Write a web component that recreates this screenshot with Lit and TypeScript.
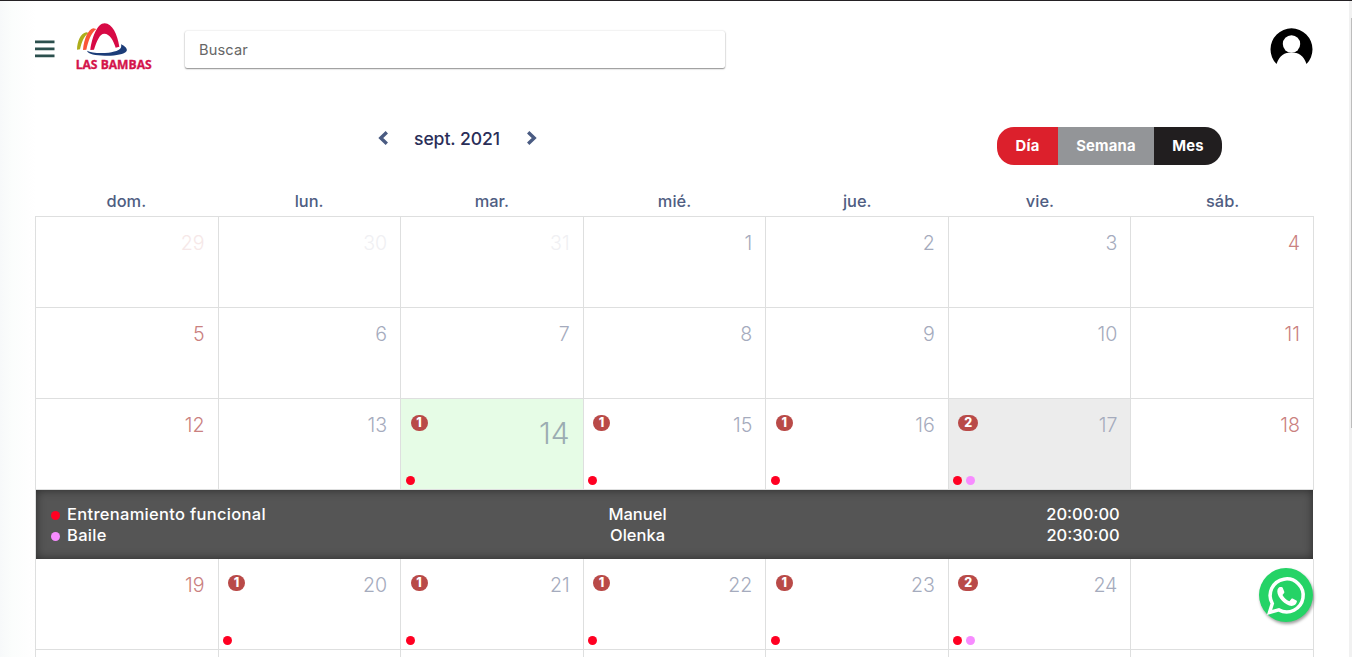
import { LitElement, html, css, svg, nothing } from "lit";
import { customElement, property } from "lit/decorators.js";
import { classMap } from "lit/directives/class-map.js";

interface Day {
  n?: number;
  out?: boolean;
  today?: boolean;
  open?: boolean;
  events?: string[];
}

const RED = "red";
const PINK = "pink";
const range = (from: number): Day[] => Array.from({ length: 7 }, (_, i) => ({ n: from + i }));

const WEEKS: Day[][] = [
  [{ n: 29, out: true }, { n: 30, out: true }, { n: 31, out: true }, { n: 1 }, { n: 2 }, { n: 3 }, { n: 4 }],
  range(5),
  [
    { n: 12 },
    { n: 13 },
    { n: 14, today: true, events: [RED] },
    { n: 15, events: [RED] },
    { n: 16, events: [RED] },
    { n: 17, open: true, events: [RED, PINK] },
    { n: 18 },
  ],
  [
    { n: 19 },
    { n: 20, events: [RED] },
    { n: 21, events: [RED] },
    { n: 22, events: [RED] },
    { n: 23, events: [RED] },
    { n: 24, events: [RED, PINK] },
    { n: 25 },
  ],
  Array.from({ length: 7 }, () => ({})),
];

const DETAILS = [
  { color: RED, title: "Entrenamiento funcional", coach: "Manuel", time: "20:00:00" },
  { color: PINK, title: "Baile", coach: "Olenka", time: "20:30:00" },
];

const chevron = (d: string) => html`<svg class="chev" viewBox="0 0 12 16" width="12" height="16">
  ${svg`<path d=${d} fill="none" stroke="#4a5b82" stroke-width="3.4"/>`}
</svg>`;

@customElement("top-bar")
class TopBar extends LitElement {
  static styles = css`
    :host { display: flex; height: 97px; padding: 0 39px 0 35px; }
    .menu { margin-top: 39px; width: 20px; height: 18px; }
    .logo { margin: 20px 0 0 20px; width: 78px; height: 50px; }
    .search {
      box-sizing: border-box; margin: 30px 0 0 32px; width: 540px; height: 37px; border: 0;
      border-radius: 2px; padding: 0 14px; background: #fff; outline: none;
      box-shadow: 0 1px 1.5px rgba(0, 0, 0, 0.42), 0 0 2px rgba(0, 0, 0, 0.16);
      font: 400 14.6px Inter, sans-serif; letter-spacing: 0.15px; color: #666;
    }
    .search::placeholder { color: #666; opacity: 1; }
    .avatar { margin: 26px 0 0 auto; width: 43px; height: 37px; }
  `;
  render() {
    return html`
      <svg class="menu" viewBox="0 0 20 18"><path d="M0 1.900h19.500M0 8.900h19.500M0 15.900h19.500" stroke="#2b4f4d" stroke-width="2.800"/></svg>
      <svg class="logo" viewBox="225 63 234 150">
        <path d="M231 149C232 124 241 101 259 97L266 99C252 108 245 126 240 148Z" fill="#adad1a"/>
        <path d="M249 150C252 116 264 89 280 85L289 87C272 101 265 123 259 149Z" fill="#fa5537"/>
        <path d="M261 152C273 159 301 161 326 158C350 155 368 149 363 133C376 139 383 147 380 153C372 164 343 168 314 167C287 166 264 162 261 152Z" fill="#1c3d78"/>
        <path d="M271 150C276 111 292 70 314 70C337 70 352 103 358 140L347 143C340 121 329 101 313 101C299 101 290 124 282 149Z" fill="#d70a45"/>
        <text x="227" y="206" textLength="228" lengthAdjust="spacingAndGlyphs" font-family="Open Sans, sans-serif" font-weight="700" font-size="35" fill="#d4144b" stroke="#d4144b" stroke-width="1">LAS BAMBAS</text>
      </svg>
      <input class="search" placeholder="Buscar" />
      <svg class="avatar" viewBox="0 0 43 37">
        <path d="M6.500 37A21 21 0 1 1 36.500 37C33.500 28 28.500 25.500 21.500 25.500S9.500 28 6.500 37Z" fill="#000"/>
        <circle cx="21.500" cy="17" r="8.700" fill="#fff"/>
      </svg>
    `;
  }
}

@customElement("day-cell")
class DayCell extends LitElement {
  @property({ attribute: false }) day!: Day;
  @property({ type: Boolean }) weekend = false;
  static styles = css`
    :host { display: block; min-width: 0; }
    .cell {
      box-sizing: border-box; height: 91px; display: flex; flex-direction: column; justify-content: space-between;
      border-right: 1px solid #dedfdf; border-bottom: 1px solid #dedfdf; padding: 16px 13px 4px 4.4px;
    }
    .today { background: #e6fce6; }
    .open { background: #ececec; }
    .top { display: flex; justify-content: space-between; align-items: flex-start; }
    .badge {
      margin-left: 5px; height: 16px; min-width: 17px; box-sizing: border-box; padding: 0 5px; border-radius: 10px;
      background: #b94a48; color: #fff; font: 800 12.5px/16px Inter, sans-serif; text-align: center;
    }
    .wide { min-width: 20px; }
    .num { margin-left: auto; font-size: 19.6px; line-height: 20px; color: #a5abbd; font-weight: 350; }
    .weekend .num { color: #ca8180; }
    .out .num { color: #f0f0f3; }
    .out.weekend .num { color: #f6e8e8; }
    .today .num { font-size: 30px; line-height: 36px; font-weight: 300; color: #9bacb2; }
    .dots { display: flex; gap: 4px; }
    .dot { width: 9px; height: 9px; border-radius: 50%; }
    .red { background: #ff0022; }
    .pink { background: #f78cff; }
  `;
  render() {
    const d = this.day;
    const ev = d.events ?? [];
    return html`<div class=${classMap({ cell: true, today: !!d.today, open: !!d.open, out: !!d.out, weekend: this.weekend })}>
      <div class="top">
        ${ev.length ? html`<span class=${classMap({ badge: true, wide: ev.length > 1 })}>${ev.length}</span>` : nothing}
        ${d.n ? html`<span class="num">${d.n}</span>` : nothing}
      </div>
      <div class="dots">${ev.map((c) => html`<span class="dot ${c}"></span>`)}</div>
    </div>`;
  }
}

@customElement("app-root")
class AppRoot extends LitElement {
  static styles = css`
    :host {
      display: block; position: relative; box-sizing: border-box; height: 657px; overflow: hidden;
      border-top: 1px solid #242124; font-family: Inter, sans-serif;
      background: linear-gradient(90deg, #f7f9fa 0, #fbfdfc 12px, #fefefe 28px, #fff 36px);
    }
    .tools { display: flex; height: 92px; }
    .nav { display: flex; align-items: center; margin: 29px 0 0 377px; height: 22px; }
    .month { width: 87px; margin: 0 24.5px 0 25px; font-size: 17.6px; font-weight: 500; color: #2a2e58; white-space: nowrap; letter-spacing: -0.1px; }
    .chev { display: block; }
    .views { display: flex; height: 38px; margin: 29px 130px 0 auto; border-radius: 17px; overflow: hidden; }
    .view { border: 0; padding: 0 0 1px; color: #fff; font: 700 14.8px Inter, sans-serif; letter-spacing: 0.2px; }
    .day { width: 61px; background: #dc202c; }
    .week { width: 96px; background: #939598; }
    .mon { width: 68px; background: #211e1f; }
    .names, .week-row { display: grid; grid-template-columns: repeat(7, 1fr); }
    .names { width: 1279px; margin-left: 35px; height: 26px; }
    .name { text-align: center; font-size: 16.400px; line-height: 22px; font-weight: 500; color: #4f5d82; }
    .grid { box-sizing: border-box; width: 1279px; margin-left: 35px; border: 1px solid #dedfdf; border-width: 1px 0 0 1px; }
    .panel {
      box-sizing: border-box; height: 69px; padding: 14px 0 0 15px; margin-right: 1px; background: #555;
      box-shadow: inset 0 0 10px rgba(0, 0, 0, 0.5); color: #fff; font-size: 16.5px; line-height: 21px; font-weight: 500;
    }
    .line { display: grid; grid-template-columns: 16px 402px 337px 1fr; }
    .title { letter-spacing: 0.3px; }
    .dot { width: 9px; height: 9px; border-radius: 50%; margin-top: 7px; }
    .red { background: #ff0022; }
    .pink { background: #f78cff; }
    .coach { width: 337px; text-align: center; }
    .time { width: 554px; text-align: center; }
    .wa { position: absolute; left: 1255px; top: 564px; width: 64px; height: 64px; filter: drop-shadow(1.5px 2px 1.5px rgba(0, 0, 0, 0.38)); }
    .track { position: absolute; right: 0; top: 0; width: 3px; height: 656px; background: #f1f1f1; }
    .thumb { margin: 17px 0 0 2px; height: 410px; background: #bdbdbd; }
  `;
  render() {
    return html`
      <top-bar></top-bar>
      <div class="tools">
        <div class="nav">
          ${chevron("M9.800 2.300L3.800 8L9.800 13.700")}
          <span class="month">sept. 2021</span>
          ${chevron("M2.200 2.300L8.200 8L2.200 13.700")}
        </div>
        <div class="views">
          <button class="view day">Día</button><button class="view week">Semana</button><button class="view mon">Mes</button>
        </div>
      </div>
      <div class="names">
        ${["dom.", "lun.", "mar.", "mié.", "jue.", "vie.", "sáb."].map((n) => html`<span class="name">${n}</span>`)}
      </div>
      <div class="grid">
        ${WEEKS.map(
          (w) => html`<div class="week-row">
              ${w.map((d, i) => html`<day-cell .day=${d} ?weekend=${i === 0 || i === 6}></day-cell>`)}
            </div>
            ${w.some((d) => d.open)
              ? html`<div class="panel">
                  ${DETAILS.map(
                    (e) => html`<div class="line">
                      <span class="dot ${e.color}"></span><span class="title">${e.title}</span>
                      <span class="coach">${e.coach}</span><span class="time">${e.time}</span>
                    </div>`
                  )}
                </div>`
              : nothing}`
        )}
      </div>
      <svg class="wa" viewBox="0 0 64 64">
        <circle cx="31" cy="30" r="27" fill="#25d366"/>
        <path d="M14.500 47.500L17.300 38.500A16.500 16.500 0 1 1 23.800 44.900Z" fill="none" stroke="#fff" stroke-width="3.500" stroke-linejoin="miter"/>
        <path d="M22.300 26.500C22.300 23.500 24 22 25 22h1.500c.6 0 1 .3 1.200.8l1.600 3.900c.2.500 0 1-.2 1.300l-1.600 2c1.500 3 4 5 6.900 6.200l1.900-2.300c.4-.5.8-.6 1.300-.4l3.800 1.900c.5.300.6.600.5 1.200c-.3 2.800-2.600 4.300-5.300 4.300c-6.500-.5-14.300-8.500-14.300-14.400Z" fill="#fff"/>
      </svg>
      <div class="track"><div class="thumb"></div></div>
    `;
  }
}
